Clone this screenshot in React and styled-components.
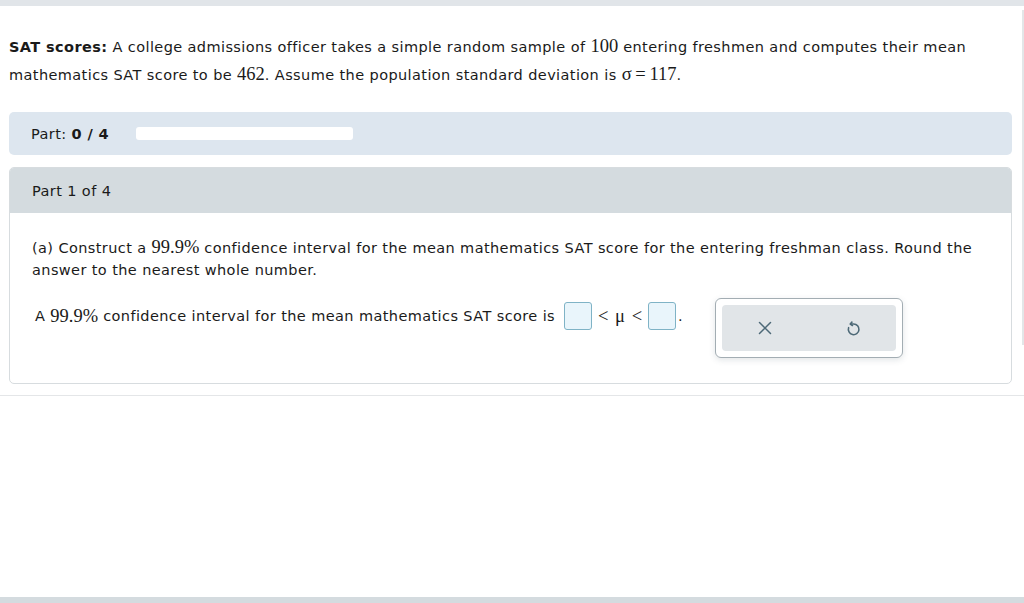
import React from 'react'
import styled, { createGlobalStyle } from 'styled-components'

const GlobalStyle = createGlobalStyle`
  html, body {
    margin: 0;
    padding: 0;
    background: #ffffff;
  }
  body {
    font-family: "DejaVu Sans", Verdana, sans-serif;
    font-size: 14.5px;
    letter-spacing: 0.4px;
    color: #1a1a1a;
  }
`

const Page = styled.div`
  position: relative;
  width: 1024px;
  height: 603px;
  overflow: hidden;
  display: flex;
  flex-direction: column;
`

const TopBar = styled.div`
  height: 6px;
  background: #e1e5e9;
  flex-shrink: 0;
`

const Scroller = styled.div`
  flex: 1;
`

const Content = styled.div`
  padding: 27px 12px 11px 9px;
  border-bottom: 1px solid #e4e6e8;
  position: relative;

  &::after {
    content: '';
    position: absolute;
    right: 0;
    top: 4px;
    height: 335px;
    width: 2px;
    background: #e3e6e8;
  }
`

const Intro = styled.p`
  margin: 0 0 23px;
  line-height: 27px;
`

const Math = styled.span`
  font-family: "Liberation Serif", "Times New Roman", serif;
  font-size: 18.5px;
  letter-spacing: 0;
`

const PartBar = styled.div`
  height: 43px;
  background: #dde6ef;
  border-radius: 5px;
  display: flex;
  align-items: center;
  padding: 0 22px;
  gap: 27px;
  margin-bottom: 12px;
`

const PartLabel = styled.span`
  b {
    font-weight: bold;
  }
`

const Progress = styled.div`
  width: 217px;
  height: 13px;
  background: #ffffff;
  border-radius: 3px;
`

const Card = styled.div`
  border: 1px solid #d7dcdf;
  border-radius: 5px;
  overflow: hidden;
`

const CardHeader = styled.div`
  height: 45px;
  background: #d4dbdf;
  display: flex;
  align-items: center;
  padding: 0 22px;
`

const CardBody = styled.div`
  padding: 23px 22px 0;
  height: 170px;
  box-sizing: border-box;
`

const Question = styled.p`
  margin: 0 0 21px;
  line-height: 22px;
`

const AnswerRow = styled.div`
  display: flex;
  align-items: flex-start;
  padding-left: 3px;
`

const AnswerText = styled.span`
  display: flex;
  align-items: center;
  height: 28px;
  white-space: nowrap;
`

const Blank = styled.span`
  display: inline-block;
  width: 26px;
  height: 26px;
  border: 1px solid #7fb3c6;
  border-radius: 3px;
  background: #e9f5fb;
  margin: 0 ${p => p.$right}px 0 ${p => p.$left}px;
`

const Rel = styled.span`
  font-family: "Liberation Serif", "Times New Roman", serif;
  font-size: 18.5px;
  letter-spacing: 0;
  margin: 0 4px;
  word-spacing: 2px;
`

const ActionBox = styled.div`
  margin-left: 32px;
  margin-top: -4px;
  width: 174px;
  height: 46px;
  padding: 6px;
  border: 1px solid #a3adb3;
  border-radius: 6px;
  background: #ffffff;
  box-shadow: 0 2px 6px rgba(60, 80, 95, 0.15);
`

const ActionInner = styled.div`
  height: 100%;
  background: #e1e5e8;
  border-radius: 4px;
  display: flex;
  align-items: center;
  justify-content: center;
  gap: 65px;
`

const IconButton = styled.button`
  border: 0;
  background: transparent;
  padding: 0;
  width: 24px;
  height: 24px;
  display: flex;
  align-items: center;
  justify-content: center;
  color: #4d6977;
  cursor: pointer;
`

const BottomBar = styled.div`
  height: 6px;
  background: #d4dbdf;
  flex-shrink: 0;
`

const CloseIcon = () => (
  <svg width="16" height="16" viewBox="0 0 16 16" fill="none" stroke="currentColor" strokeWidth="1.5" strokeLinecap="round">
    <path d="M2.5 2.5 L13.5 13.5 M13.5 2.5 L2.5 13.5" />
  </svg>
)

const UndoIcon = () => (
  <svg width="17" height="17" viewBox="0 0 16 16" fill="none" stroke="currentColor" strokeWidth="1.5" strokeLinecap="round" strokeLinejoin="round">
    <path d="M6.5 2 L5 3.8 L7 5.2" />
    <path d="M5.2 3.8 H8.2 A5 5 0 1 1 3.4 7.2" />
  </svg>
)

export default function App() {
  return (
    <>
      <GlobalStyle />
      <Page>
        <TopBar />
        <Scroller>
          <Content>
            <Intro>
              <b>SAT scores:</b> A college admissions officer takes a simple random sample of <Math>100</Math> entering
              freshmen and computes their mean mathematics SAT score to be <Math>462</Math>. Assume the population
              standard deviation is <Math>σ&thinsp;=&thinsp;117</Math>.
            </Intro>
            <PartBar>
              <PartLabel>Part: <b>0 / 4</b></PartLabel>
              <Progress />
            </PartBar>
            <Card>
              <CardHeader>Part 1 of 4</CardHeader>
              <CardBody>
                <Question>
                  (a) Construct a <Math>99.9%</Math> confidence interval for the mean mathematics SAT score for the
                  entering freshman class. Round the answer to the nearest whole number.
                </Question>
                <AnswerRow>
                  <AnswerText>
                    A&nbsp;<Math>99.9%</Math>&nbsp;confidence interval for the mean mathematics SAT score is
                    <Blank $left={9} $right={2} />
                    <Rel>&lt; μ &lt;</Rel>
                    <Blank $left={2} $right={2} />.
                  </AnswerText>
                  <ActionBox>
                    <ActionInner>
                      <IconButton aria-label="Clear"><CloseIcon /></IconButton>
                      <IconButton aria-label="Undo"><UndoIcon /></IconButton>
                    </ActionInner>
                  </ActionBox>
                </AnswerRow>
              </CardBody>
            </Card>
          </Content>
        </Scroller>
        <BottomBar />
      </Page>
    </>
  )
}
